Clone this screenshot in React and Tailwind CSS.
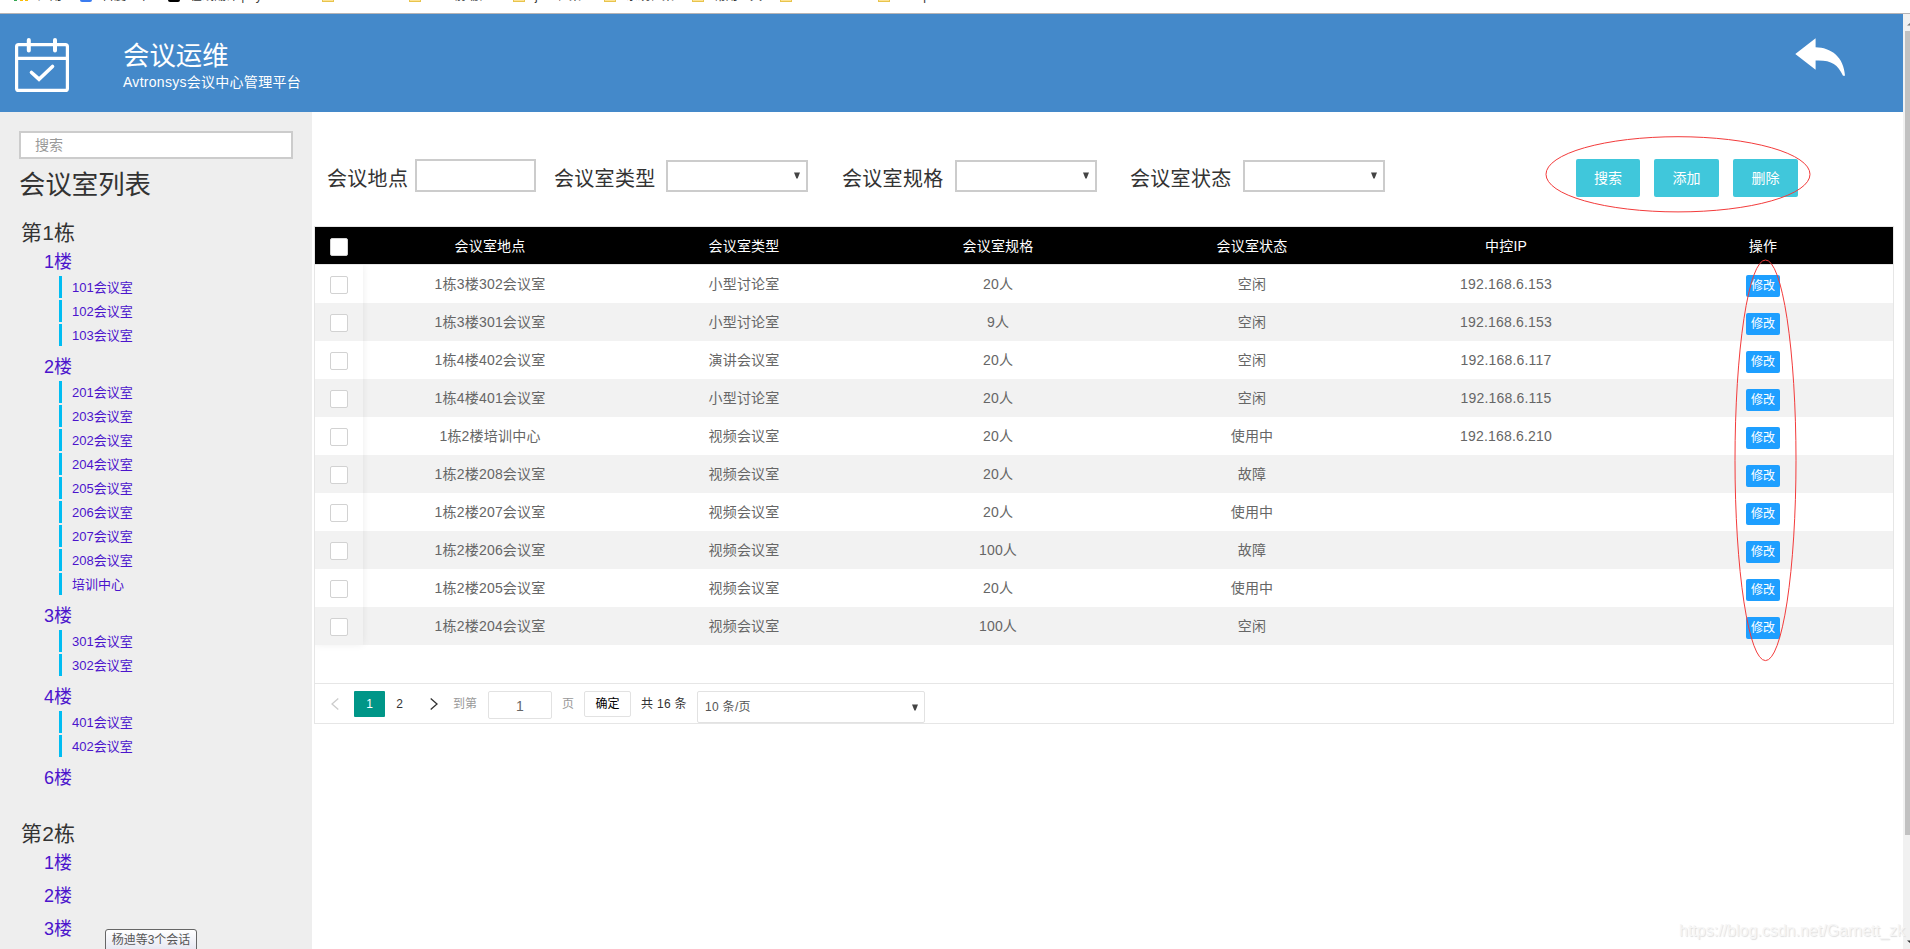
import React from "react";

const buildings = [
  {
    name: "第1栋",
    floors: [
      { name: "1楼", rooms: ["101会议室", "102会议室", "103会议室"] },
      {
        name: "2楼",
        rooms: ["201会议室", "203会议室", "202会议室", "204会议室", "205会议室", "206会议室", "207会议室", "208会议室", "培训中心"],
      },
      { name: "3楼", rooms: ["301会议室", "302会议室"] },
      { name: "4楼", rooms: ["401会议室", "402会议室"] },
      { name: "6楼", rooms: [] },
    ],
  },
  {
    name: "第2栋",
    floors: [
      { name: "1楼", rooms: [] },
      { name: "2楼", rooms: [] },
      { name: "3楼", rooms: [] },
    ],
  },
];

const rows = [
  ["1栋3楼302会议室", "小型讨论室", "20人", "空闲", "192.168.6.153"],
  ["1栋3楼301会议室", "小型讨论室", "9人", "空闲", "192.168.6.153"],
  ["1栋4楼402会议室", "演讲会议室", "20人", "空闲", "192.168.6.117"],
  ["1栋4楼401会议室", "小型讨论室", "20人", "空闲", "192.168.6.115"],
  ["1栋2楼培训中心", "视频会议室", "20人", "使用中", "192.168.6.210"],
  ["1栋2楼208会议室", "视频会议室", "20人", "故障", ""],
  ["1栋2楼207会议室", "视频会议室", "20人", "使用中", ""],
  ["1栋2楼206会议室", "视频会议室", "100人", "故障", ""],
  ["1栋2楼205会议室", "视频会议室", "20人", "使用中", ""],
  ["1栋2楼204会议室", "视频会议室", "100人", "空闲", ""],
];

const columns = ["会议室地点", "会议室类型", "会议室规格", "会议室状态", "中控IP", "操作"];

const bookmarks = [
  { icon: "apps", text: "应用", w: "w-[66px]" },
  { icon: "paw", text: "百度一下", w: "w-[88px]" },
  { icon: "dot", text: "在线翻译 | Sy", w: "w-[154px]" },
  { icon: "folder", text: "", w: "w-[87px]" },
  { icon: "folder", text: "       前端框", w: "w-[104px]" },
  { icon: "folder", text: "java框架", w: "w-[91px]" },
  { icon: "folder", text: "系统框架", w: "w-[88px]" },
  { icon: "folder", text: "常用工具", w: "w-[88px]" },
  { icon: "folder", text: "", w: "w-[98px]" },
  { icon: "folder", text: "       p", w: "w-[60px]" },
];

function BookmarkIcon({ kind }) {
  if (kind === "apps")
    return (
      <div className="flex h-px w-[14px] shrink-0 justify-between">
        <span className="w-[3px] bg-[#34a853]" />
        <span className="w-[3px] bg-[#fbbc05]" />
        <span className="w-[3px] bg-[#fbbc05]" />
      </div>
    );
  if (kind === "paw") return <div className="h-[2px] w-[12px] shrink-0 rounded-b bg-[#3b7cf0]" />;
  if (kind === "dot") return <div className="h-[2px] w-[12px] shrink-0 rounded-b-full bg-black" />;
  return <div className="h-[2px] w-[12px] shrink-0 border-x border-b border-[#e8c44c] bg-[#fde293]" />;
}

function Caret() {
  return (
    <svg width="6" height="7" viewBox="0 0 6 7" className="shrink-0">
      <path d="M0 0.5H6L3.6 6.5H2.4Z" fill="#444" />
    </svg>
  );
}

function Select({ className }) {
  return (
    <div className={`flex h-8 items-center justify-end border-2 border-[#ccc] bg-white pr-[6px] pb-px ${className}`}>
      <Caret />
    </div>
  );
}

function Checkbox() {
  return <span className="block h-[18px] w-[18px] rounded-[2px] border border-[#d2d2d2] bg-white" />;
}

export default function App() {
  return (
    <div className="relative h-[949px] w-[1910px] overflow-hidden bg-white font-['Liberation_Sans','Noto_Sans_CJK_SC',sans-serif] text-[#333]">
      <div className="h-[14px] overflow-hidden border-b border-[#b6b4b6]">
        <div className="flex h-[3px] overflow-hidden pl-[14px]">
          {bookmarks.map((b, i) => (
            <div key={i} className={`flex shrink-0 gap-[10px] ${b.w}`}>
              <BookmarkIcon kind={b.icon} />
              <span className="-mt-[10px] h-3 text-xs leading-3 whitespace-pre">{b.text}</span>
            </div>
          ))}
        </div>
      </div>

      <div className="flex h-[935px]">
        <div className="flex w-[1903px] flex-col">
          <header className="flex h-[98px] shrink-0 items-start bg-[#4489ca] text-white">
            <svg width="54" height="54" viewBox="0 0 54 54" fill="none" stroke="#fff" className="mt-6 ml-[15px]">
              <rect x="1.6" y="6.6" width="50.8" height="45.8" rx="2" strokeWidth="3.2" />
              <path d="M1.5 20.3H52.5" strokeWidth="3.2" />
              <path d="M13.8 2V12.5M40 2V12.5" strokeWidth="4" strokeLinecap="round" />
              <path d="M16.5 34.5L24 41.2L37.5 28.5" strokeWidth="3.6" strokeLinecap="round" />
            </svg>
            <div className="ml-[54px] pt-[23px]">
              <h1 className="h-9 text-[26.4px] leading-[38px]">会议运维</h1>
              <p className="h-[18px] text-sm leading-[18px] tracking-[0.28px]">Avtronsys会议中心管理平台</p>
            </div>
            <svg width="50" height="38" viewBox="0 0 50 38" className="mt-6 mr-[58px] ml-auto">
              <path d="M0.3 16L20.6 0.3V9.3C36 9.5 49 19 50 37.8H48C42.5 26 36 22 20.6 22.6V31.7Z" fill="#fff" />
            </svg>
          </header>

          <div className="flex min-h-0 flex-1">
            <aside className="w-[312px] shrink-0 overflow-hidden bg-[#eee] pt-[19px]">
              <div className="ml-[19px] flex h-7 w-[274px] items-center border-2 border-[#ccc] bg-white pl-[14px] text-sm text-[#999]">
                搜索
              </div>
              <h2 className="mt-[6px] ml-[19px] h-10 text-[26.4px] leading-10">会议室列表</h2>
              <div className="mt-[11px]">
                {buildings.map((b) => (
                  <section key={b.name} className="pb-5">
                    <h3 className="ml-[21px] h-8 text-[21px] leading-[34px] tracking-[0.2px]">{b.name}</h3>
                    {b.floors.map((f) => (
                      <div key={f.name} className="pb-[5px] text-[#4b14cc]">
                        <div className="ml-11 h-7 text-lg leading-7">{f.name}</div>
                        {f.rooms.map((r) => (
                          <div
                            key={r}
                            className="mb-[2px] ml-[59px] h-[22px] border-l-3 border-[#00bdf2] pl-[10px] text-[13px] leading-[23px]"
                          >
                            {r}
                          </div>
                        ))}
                      </div>
                    ))}
                  </section>
                ))}
              </div>
            </aside>

            <main className="min-w-0 flex-1 pl-[2px]">
              <div className="flex h-[114px] items-start pt-[47px] pl-[13px] text-xl leading-[40px] tracking-[0.3px]">
                <span className="w-[88px]">会议地点</span>
                <div className="mr-[18px] h-[33px] w-[121px] border-2 border-[#ccc]" />
                <span className="w-[112px]">会议室类型</span>
                <Select className="mt-px mr-[34px] w-[142px]" />
                <span className="w-[113px]">会议室规格</span>
                <Select className="mt-px mr-[33px] w-[142px]" />
                <span className="w-[113px]">会议室状态</span>
                <Select className="mt-px w-[142px]" />
                <div className="ml-[191px] flex gap-[14px] text-center text-sm tracking-normal text-white">
                  <button className="h-[38px] w-16 rounded-[2px] bg-[#40c7db]">搜索</button>
                  <button className="h-[38px] w-[65px] rounded-[2px] bg-[#40c7db]">添加</button>
                  <button className="h-[38px] w-[65px] rounded-[2px] bg-[#40c7db]">删除</button>
                </div>
              </div>

              <div className="h-[498px] w-[1580px] border border-[#e6e6e6]">
                <div className="h-[456px]">
                  <div className="grid h-[38px] grid-cols-[48px_repeat(5,254px)_1fr] border-b border-[#e6e6e6] bg-black text-center text-sm leading-[38px] tracking-[0.2px] text-white">
                    <div className="pt-[11px] pl-[15px]">
                      <Checkbox />
                    </div>
                    {columns.map((c) => (
                      <div key={c}>{c}</div>
                    ))}
                  </div>
                  <div className="relative">
                    {rows.map((r, i) => (
                      <div
                        key={i}
                        className="grid h-[38px] grid-cols-[48px_repeat(5,254px)_1fr] text-center text-sm leading-[38px] tracking-[0.2px] text-[#666] even:bg-[#f2f2f2]"
                      >
                        <div className="pt-[11px] pl-[15px]">
                          <Checkbox />
                        </div>
                        {r.map((c, j) => (
                          <div key={j}>{c}</div>
                        ))}
                        <div className="flex justify-center pt-[10px]">
                          <button className="h-[22px] w-[34px] rounded-[2px] bg-[#1e9fff] text-xs leading-[22px] tracking-normal text-white">
                            修改
                          </button>
                        </div>
                      </div>
                    ))}
                    <div className="pointer-events-none absolute top-0 left-0 h-full w-12 shadow-[0_-1px_8px_rgba(0,0,0,0.08)] [clip-path:inset(0_-12px_-12px_0)]" />
                  </div>
                </div>
                <div className="flex h-10 items-start border-t border-[#e6e6e6] pt-[7px] text-xs leading-[26px]">
                  <svg width="8" height="12" viewBox="0 0 8 12" fill="none" stroke="#ccc" strokeWidth="1.3" className="mt-[7px] ml-4">
                    <path d="M7.3 0.5L1 6L7.3 11.5" />
                  </svg>
                  <span className="ml-[15px] h-[26px] w-[31px] rounded-[1px] bg-[#009688] text-center text-white">1</span>
                  <span className="w-[29px] text-center">2</span>
                  <svg width="8" height="12" viewBox="0 0 8 12" fill="none" stroke="#333" strokeWidth="1.3" className="mt-[7px] ml-4">
                    <path d="M0.7 0.5L7 6L0.7 11.5" />
                  </svg>
                  <span className="ml-[15px] w-[35px] text-[#999]">到第</span>
                  <span className="h-7 w-16 rounded-[2px] border border-[#e2e2e2] text-center text-sm leading-7 text-[#666]">1</span>
                  <span className="ml-[10px] w-[22px] text-[#999]">页</span>
                  <button className="h-[26px] w-[47px] rounded-[2px] border border-[#e2e2e2] leading-[25px] text-black">确定</button>
                  <span className="ml-[10px] w-[56px] tracking-[0.3px] whitespace-nowrap">共 16 条</span>
                  <span className="flex h-8 w-[228px] items-center justify-between rounded-[2px] border border-[#e2e2e2] pr-[6px] pl-[7px] leading-8 tracking-[0.3px] text-[#555]">
                    10 条/页
                    <Caret />
                  </span>
                </div>
              </div>
            </main>
          </div>
        </div>

        <div className="w-[7px] bg-[#f1f1f1] pt-[17px] pl-[2px]">
          <div className="h-[804px] bg-[#c1c1c1]" />
        </div>
      </div>

      <svg width="1910" height="949" viewBox="0 0 1910 949" fill="none" stroke="#f33b3b" className="pointer-events-none absolute inset-0">
        <ellipse cx="1678" cy="174.3" rx="132" ry="37.6" />
        <ellipse cx="1765.5" cy="460.3" rx="30.5" ry="200.3" />
        <path d="M1910 23V25.5H1907Z" fill="#777" stroke="none" />
        <path d="M1910 943V940.5H1907Z" fill="#333" stroke="none" />
      </svg>

      <div className="absolute top-[929px] left-[105px] h-6 w-[92px] rounded-[3px] border border-[#666] bg-gradient-to-b from-white to-[#e4e5f0] text-center text-xs leading-[21px] text-[#555]">
        杨迪等3个会话
      </div>
      <div className="absolute top-[919px] left-[1679px] text-base leading-6 whitespace-nowrap text-[#f6f6f6] [text-shadow:1px_1px_1px_#dedede]">
        https://blog.csdn.net/Garnett_zk
      </div>
    </div>
  );
}
